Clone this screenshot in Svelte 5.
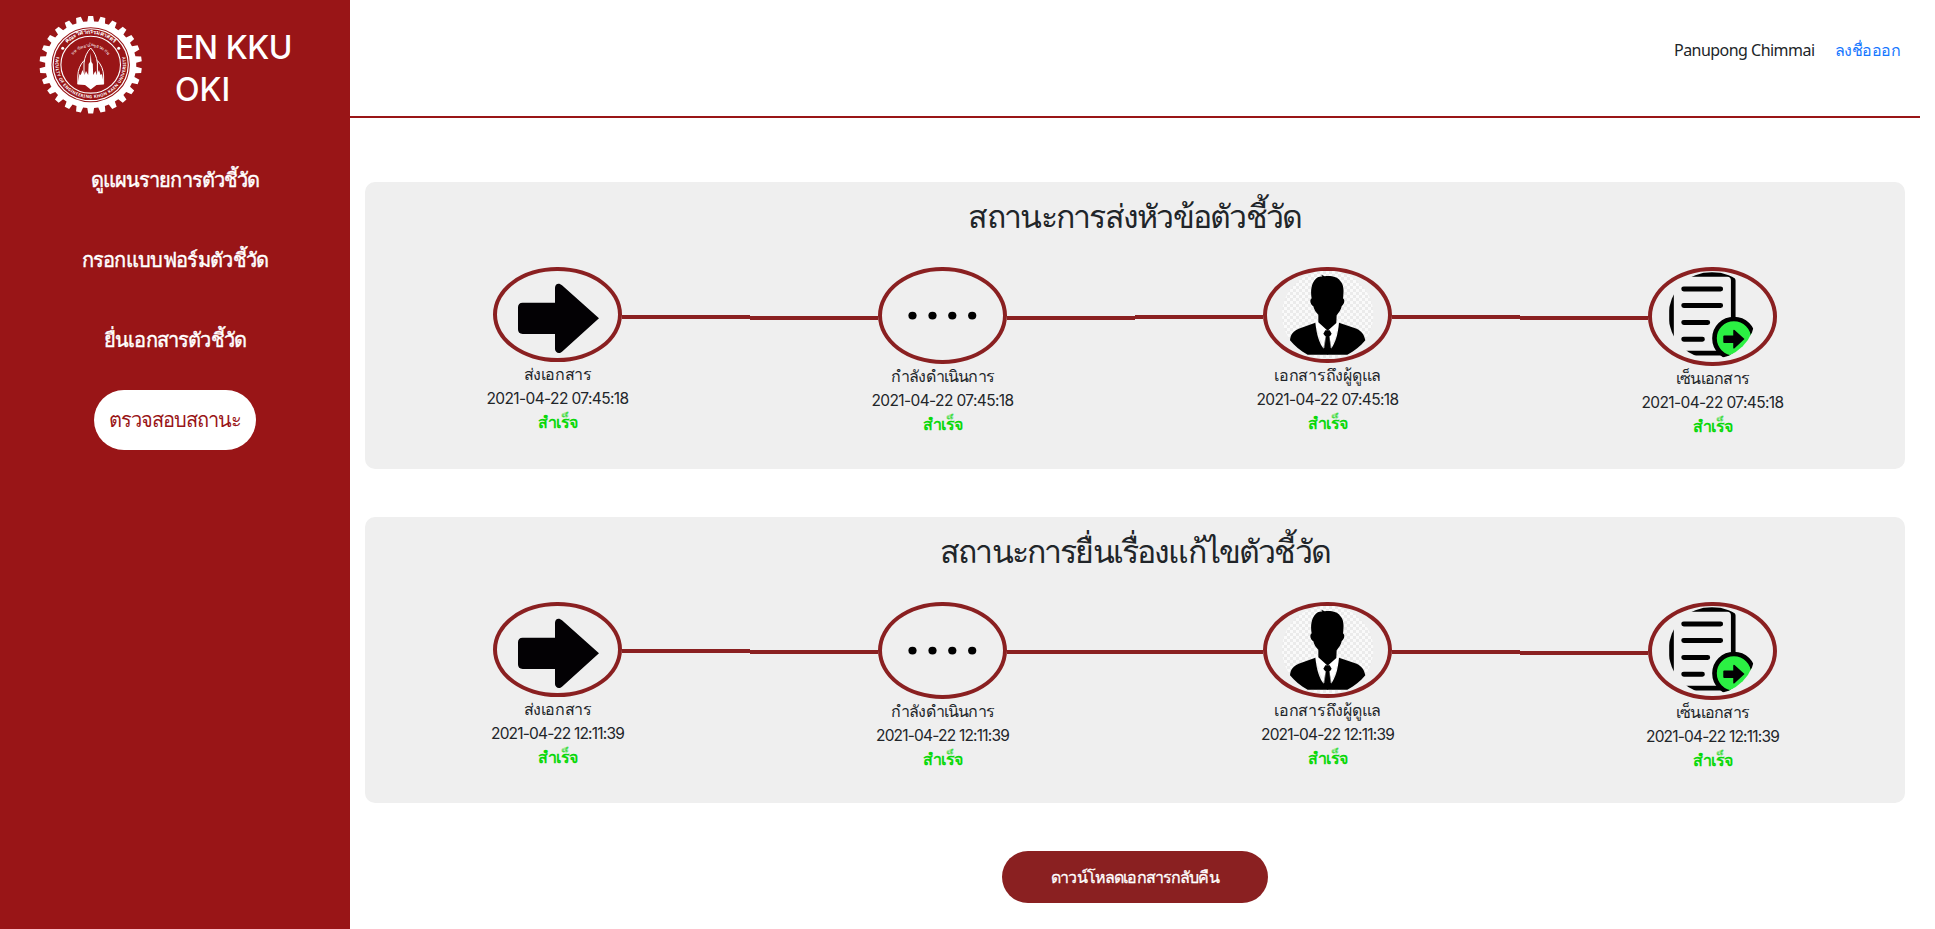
<script>
  const menu = [
    { label: 'ดูแผนรายการตัวชี้วัด', width: 168 },
    { label: 'กรอกแบบฟอร์มตัวชี้วัด', width: 187 },
    { label: 'ยื่นเอกสารตัวชี้วัด', width: 142 },
    { label: 'ตรวจสอบสถานะ', width: 132, active: true }
  ];

  const steps = [
    { icon: 'send', label: 'ส่งเอกสาร', width: 68, height: 95 },
    { icon: 'wait', label: 'กำลังดำเนินการ', width: 103, height: 97 },
    { icon: 'person', label: 'เอกสารถึงผู้ดูแล', width: 107, height: 96 },
    { icon: 'sign', label: 'เซ็นเอกสาร', width: 73, height: 98.6 }
  ];

  const cards = [
    { title: 'สถานะการส่งหัวข้อตัวชี้วัด', width: 333, time: '2021-04-22 07:45:18', timeWidth: 142 },
    { title: 'สถานะการยื่นเรื่องแก้ไขตัวชี้วัด', width: 390, time: '2021-04-22 12:11:39', timeWidth: 133 }
  ];

  // Tracks the text in or out until it takes the given width.
  function fit(node, width) {
    node.style.letterSpacing = '0px';
    const natural = node.getBoundingClientRect().width;
    node.style.letterSpacing = '1px';
    const clusters = node.getBoundingClientRect().width - natural;
    if (clusters > 0) node.style.letterSpacing = (width - natural) / clusters + 'px';
  }

  function gear(cx, cy, rx, ry, count) {
    const at = (a, k) => `${(cx + Math.sin(a) * rx * k).toFixed(2)},${(cy - Math.cos(a) * ry * k).toFixed(2)}`;
    const step = (Math.PI * 2) / count;
    const points = [];
    for (let i = 0; i < count; i++) {
      const a = i * step;
      points.push(at(a - step * 0.31, 0.89), at(a - step * 0.2, 1), at(a + step * 0.2, 1), at(a + step * 0.31, 0.89));
    }
    return points.join(' ');
  }
</script>

<div class="page">
  <aside>
    <div class="brand">
      <svg class="logo" viewBox="0 0 110 106" width="110" height="106">
        <defs>
          <path id="arc-top" d="M 23 52 A 31.700 30.500 0 0 1 86.400 52" />
          <path id="arc-bottom" d="M 20.5 44 A 35.3 34 0 1 0 89 44" />
          <path id="arc-inner" d="M 34.200 54 A 20.500 19.500 0 0 1 75.200 54" />
        </defs>
        <polygon points={gear(54.7, 52.7, 51.2, 48.8, 26)} fill="#fff" />
        <ellipse cx="54.7" cy="52.7" rx="38.7" ry="37" fill="none" stroke="#991517" stroke-width="1.1" />
        <ellipse cx="54.7" cy="52.7" rx="37" ry="35.4" fill="#991517" />
        <ellipse cx="54.7" cy="52.7" rx="29.8" ry="28.4" fill="none" stroke="#fff" stroke-width="1.1" />
        <g fill="#fff" font-family="'Noto Sans', sans-serif" text-anchor="middle">
          <text font-size="5.6" font-weight="bold"><textPath href="#arc-top" startOffset="50%">คณะวิศวกรรมศาสตร์</textPath></text>
          <text font-size="4.3" font-weight="bold"><textPath href="#arc-bottom" startOffset="50%" textLength="124">FACULTY OF ENGINEERING KHON KAEN UNIVERSITY</textPath></text>
          <text font-size="4.2"><textPath href="#arc-inner" startOffset="50%">มหาวิทยาลัยขอนแก่น</textPath></text>
        </g>
        <circle cx="26.7" cy="36.3" r="1.5" fill="#fff" />
        <circle cx="82.7" cy="36.3" r="1.5" fill="#fff" />
        <g fill="none" stroke="#fff" stroke-width="1">
          <path d="M54.7 36 Q49 42 48 51 L48 68 M54.7 36 Q60.4 42 61.4 51 L61.4 68" />
          <path d="M48 48.5 Q42 55 41.8 64 V72 M67.6 72 V64 Q67.4 55 61.4 48.5" />
        </g>
        <path fill="#fff" d="M54.7 41 L55.4 50 L56.800 52 L57.2 63 L59.4 59 L60.8 63 L63 58 L64.6 63 L66 62 L67.900 72.5 L60.5 73 L54.7 77.500 L49 73 L41.500 72.5 L43.4 62 L44.8 63 L46.4 58 L48.6 63 L50 59 L52.2 63 L52.6 52 L54 50 Z" />
      </svg>
      <h1><span use:fit={117}>EN KKU</span><br />OKI</h1>
    </div>
    <nav>
      {#each menu as item}
        <a href="#menu" class:active={item.active}><span use:fit={item.width}>{item.label}</span></a>
      {/each}
    </nav>
  </aside>

  <div class="main">
    <header>
      <span class="user"><span use:fit={140.5}>Panupong Chimmai</span></span>
      <a href="#logout"><span use:fit={65.5}>ลงชื่อออก</span></a>
    </header>

    {#each cards as card}
      <section>
        <h2><span use:fit={card.width}>{card.title}</span></h2>
        <div class="steps">
          {#each steps as step, i}
            <div class="step">
              <div class="track">
                <i class:line={i > 0}></i>
                <div class="circle" style:height="{step.height}px">
                  {#if step.icon === 'send'}
                    <svg viewBox="51 33 361 261">
                      <path fill="#030104" d="M128 128 H225 V84 C225 71 237 67 246 76 L357 175 L246 275 C237 284 225 277 225 267 V222 H128 Q114 222 114 208 V142 Q114 128 128 128 Z" />
                    </svg>
                  {:else if step.icon === 'wait'}
                    <svg viewBox="0 0 120.33 89">
                      {#each [30.5, 50.5, 70.3, 90.2] as x}
                        <ellipse cx={x} cy="44.6" rx="4.1" ry="3.9" />
                      {/each}
                    </svg>
                  {:else if step.icon === 'person'}
                    <svg viewBox="21 27 361 264">
                      <defs>
                        <pattern id="checks" width="18" height="18" patternUnits="userSpaceOnUse">
                          <rect width="18" height="18" fill="#fafafa" />
                          <path fill="#ebebeb" d="M0 0h9v9H0zM9 9h9v9H9z" />
                        </pattern>
                      </defs>
                      <ellipse cx="203" cy="158" rx="137" ry="132" fill="url(#checks)" />
                      <path fill="#fff" d="M166 184 L178 170 H226 L238 184 L212 262 H192 Z" />
                      <path d="M184 38 L194 43 C212 40 234 45 240 56 C252 66 252 88 249 109 C256 115 253 126 245 133 C243 144 237 151 230 160 L229 183 L203 206 L175 181 V158 C167 151 163 144 160 133 C151 127 148 114 155 109 C151 86 154 64 167 51 C174 45 180 43 187 44 Z" />
                      <path d="M166 182 C170 218 178 245 192 261 L197 224 L190 215 L196 205 H209 L215 215 L209 224 L213 261 C226 243 234 218 237 182 L290 200 C306 208 313 219 316 235 C302 253 283 267 262 278 H143 C120 266 104 251 90 235 C91 218 100 207 116 200 Z" />
                      <path d="M197 222 H208 L215 262 L203 278 L190 262 Z" />
                      <path d="M197 222 L192 258 M209 222 L213 258" stroke="#fff" stroke-width="1.5" fill="none" />
                    </svg>
                  {:else}
                    <svg viewBox="6 33 361 273">
                      <defs><clipPath id="round"><ellipse cx="186" cy="167" rx="131" ry="131" /></clipPath></defs>
                      <g clip-path="url(#round)">
                        <rect x="64" y="43.5" width="186" height="237" rx="18" fill="none" stroke="#000" stroke-width="14" />
                        <path d="M101 87 H212 M101 137 H212 M101 188 H173 M101 238.500 H157" stroke="#000" stroke-width="15" stroke-linecap="round" />
                        <circle cx="252" cy="236" r="58.500" fill="#2bf043" stroke="#000" stroke-width="14" />
                        <path d="M223 227 H250 V212 Q251 209 254 211 L284 238 L254 266 Q250 268 250 264 V250 H223 Q220 250 220 247 V230 Q220 227 223 227 Z" fill="#030104" />
                      </g>
                    </svg>
                  {/if}
                </div>
                <i class:line={i < steps.length - 1}></i>
              </div>
              <p class="label"><span use:fit={step.width}>{step.label}</span></p>
              <p class="time"><span use:fit={card.timeWidth}>{card.time}</span></p>
              <p class="state"><span use:fit={39.5}>สำเร็จ</span></p>
            </div>
          {/each}
        </div>
      </section>
    {/each}

    <button><span use:fit={167.5}>ดาวน์โหลดเอกสารกลับคืน</span></button>
  </div>
</div>

<style>
  :global(body) {
    margin: 0;
    background: #fff;
  }
  .page {
    display: flex;
    height: 929px;
    overflow: hidden;
    color: #212529;
    font-family: 'Noto Sans', sans-serif;
    font-size: 16px;
    line-height: 24px;
  }
  .page * {
    box-sizing: border-box;
  }
  span {
    white-space: nowrap;
  }
  a {
    text-decoration: none;
  }
  aside {
    width: 350px;
    flex: none;
    background: #991517;
    color: #fff;
  }
  .brand {
    display: flex;
    height: 140px;
    padding: 12px 0 0 36px;
  }
  .logo {
    flex: none;
  }
  h1 {
    margin: 15px 0 0 29px;
    font: 500 32px/42px Inter, sans-serif;
  }
  nav {
    display: flex;
    flex-direction: column;
    align-items: center;
    gap: 20px;
    padding-top: 10px;
  }
  nav a {
    height: 60px;
    padding: 0 15px;
    border-radius: 30px;
    color: #fff;
    font-size: 20px;
    line-height: 60px;
    -webkit-text-stroke: 0.4px currentColor;
  }
  nav a.active {
    background: #fff;
    color: #991517;
    -webkit-text-stroke: 0;
  }
  .main {
    display: flex;
    flex: 1;
    flex-direction: column;
    padding-right: 15px;
  }
  header {
    display: flex;
    justify-content: flex-end;
    gap: 20px;
    height: 118px;
    margin-bottom: 64px;
    padding: 38px 20px 0 0;
    border-bottom: 2px solid #991517;
  }
  header a {
    color: #1677ff;
  }
  section {
    height: 286.5px;
    margin: 0 15px 48px;
    border-radius: 10px;
    background: #efefef;
    text-align: center;
  }
  h2 {
    height: 85px;
    margin: 0;
    padding-top: 14px;
    font-size: 32px;
    font-weight: 400;
    line-height: 40px;
  }
  .steps {
    display: grid;
    grid-template-columns: repeat(4, 1fr);
  }
  .track {
    display: grid;
    grid-template-columns: repeat(3, 1fr);
    align-items: center;
  }
  .track i {
    height: 4px;
    margin-top: 4px;
  }
  .track .line {
    background: #8a2021;
  }
  .circle {
    border: 4px solid #8a2021;
    border-radius: 50%;
  }
  .circle svg {
    display: block;
    width: 100%;
    height: 100%;
  }
  p {
    margin: 0;
    height: 24px;
  }
  .time {
    padding-top: 1px;
    font-family: Inter, sans-serif;
    font-size: 15.5px;
  }
  .state {
    color: #0bd80b;
    font-weight: 700;
  }
  button {
    align-self: center;
    width: 266px;
    height: 52px;
    padding: 0;
    border: 0;
    border-radius: 26px;
    background: #8a2021;
    color: #fff;
    font: 16px/24px 'Noto Sans', sans-serif;
    -webkit-text-stroke: 0.3px currentColor;
  }
</style>
